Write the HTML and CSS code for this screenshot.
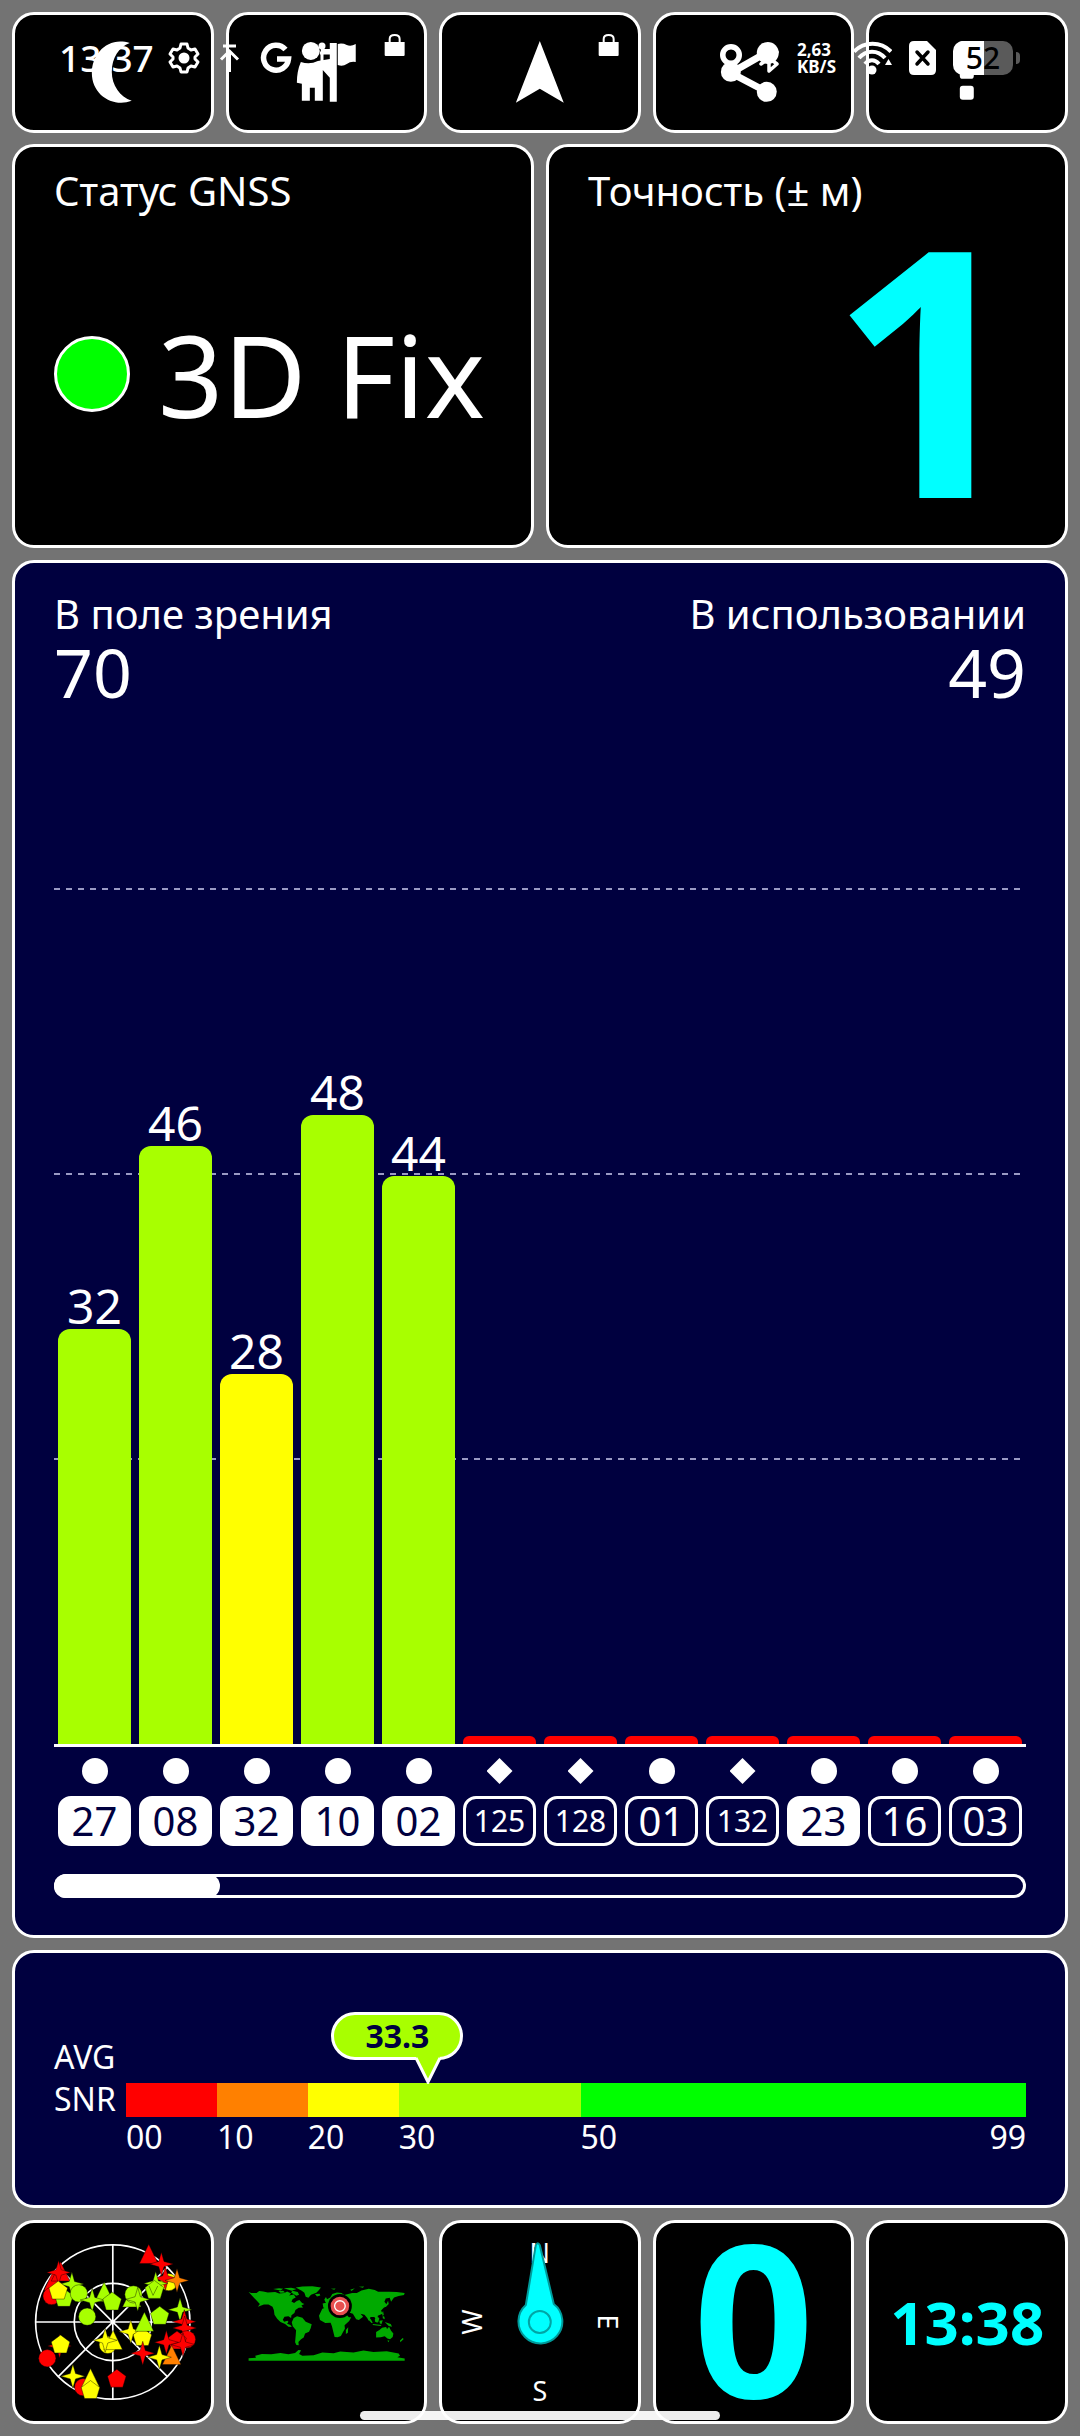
FILE: index.html
```html
<!DOCTYPE html>
<html lang="ru">
<head>
<meta charset="utf-8">
<meta name="viewport" content="width=device-width, initial-scale=1">
<title>Статус GNSS</title>
<link rel="stylesheet" href="styles.css">
</head>
<body>
<div class="statusbar">
  <div class="status-group status-left">
    <span class="clock">13:37</span>
    <svg class="icon32" viewBox="0 0 32 32"><path d="M13 2h6l1 4 3 2 4-1 3 5-3 3v2l3 3-3 5-4-1-3 2-1 4h-6l-1-4-3-2-4 1-3-5 3-3v-2l-3-3 3-5 4 1 3-2z" fill="none" stroke="#fff" stroke-width="3" stroke-linejoin="round"/><circle cx="16" cy="16" r="5.5" fill="#fff"/></svg>
    <svg class="icon32" viewBox="0 0 32 32"><path d="M9 4h13M15.500 30V10M7 17.500l8.500-8.500 8.500 8.500" fill="none" stroke="#fff" stroke-width="3"/></svg>
    <svg class="icon32" viewBox="0 0 32 32"><path d="M25.500 7.500A12.500 12.500 0 1 0 28.500 17H17" fill="none" stroke="#fff" stroke-width="5.500"/></svg>
    <svg class="icon32" viewBox="0 0 32 32"><circle cx="16" cy="4" r="3.500" fill="#fff"/><path d="M14 11h12M16 11v14l8 6" fill="none" stroke="#fff" stroke-width="3"/></svg>
  </div>
  <div class="status-group status-right">
    <svg class="ring" viewBox="0 0 22 32"><circle cx="11" cy="13" r="8" fill="none" stroke="#fff" stroke-width="6"/><path d="M3 16l8 14 8-14z" fill="#fff"/><circle cx="11" cy="13" r="5.500" fill="#000"/></svg>
    <svg class="bluetooth" viewBox="0 0 21 32"><path d="M2 10l16 12-8 7V3l8 7-16 12" fill="none" stroke="#fff" stroke-width="3.500" stroke-linejoin="round" stroke-linecap="round"/></svg>
    <span class="speed">2,63<br>KB/S</span>
    <svg class="wifi" viewBox="0 0 39 34"><path d="M1 10.500C11 0 28 0 38 10.500M6 17C13 8.500 25 8.500 32 17M12 23C16 18 22 18 26 23" fill="none" stroke="#fff" stroke-width="4"/><circle cx="19" cy="29" r="4.500" fill="#fff"/><path d="M32 24l3.500-6 3.500 6z" fill="#fff"/></svg>
    <svg class="sim" viewBox="0 0 27 34"><path d="M5 0h13l9 9v20q0 5-5 5H5q-5 0-5-5V5q0-5 5-5z" fill="#fff"/><path d="M8 11l11 12M19 11L8 23" stroke="#000" stroke-width="3.500" stroke-linecap="round"/></svg>
    <span class="battery"><span class="battery-body">52</span><span class="battery-tip"></span></span>
  </div>
</div>

<main class="dash">
  <nav class="tiles" aria-label="Действия">
    <button class="card tile" aria-label="Ночной режим"><svg viewBox="15 15 196 115"><path d="M130 43C108 36 92 54 92 73C92 95 113 108 132 101C120 97 112 85 112 72C112 58 119 47 130 43z" fill="#fff"/></svg></button>
    <button class="card tile" aria-label="Путевая точка"><svg viewBox="229 15 196 115" fill="#fff"><circle cx="311" cy="51" r="9"/><path d="M301 62q9 3 17-1l12-2v-7h-9v-3h9v-6h7v59h-7V78l-7-8v31h-8V88h-5v13h-8V84l-5-1q0-12 4-21z"/><path d="M338 44q5-1 9 1t9-1v18q-5-1-9 2t-9 1z"/><path d="M385 42h20v13q0 1-1 1h-18q-1 0-1-1z"/><path d="M390 43v-4q0-4 5-4t5 4v4" fill="none" stroke="#fff" stroke-width="2"/></svg></button>
    <button class="card tile" aria-label="Навигация"><svg viewBox="442 15 196 115" fill="#fff"><path d="M540 41l24 62-24-14-24 14z"/><path d="M599 42h20v13q0 1-1 1h-18q-1 0-1-1z"/><path d="M604 43v-4q0-4 5-4t5 4v4" fill="none" stroke="#fff" stroke-width="2"/></svg></button>
    <button class="card tile" aria-label="Поделиться"><svg viewBox="656 15 196 115" fill="#fff"><path d="M768 52l-37 21 36 19" fill="none" stroke="#fff" stroke-width="7"/><circle cx="768" cy="53" r="11"/><circle cx="731" cy="72" r="10"/><circle cx="767" cy="92" r="10"/></svg></button>
    <button class="card tile" aria-label="Предупреждение"><svg viewBox="869 15 196 115" fill="#fff"><path d="M959 45q0-4 4-4h8q4 0 4 4l-1 31q0 3-3 3h-8q-3 0-3-3z"/><rect x="960" y="86" width="14" height="14" rx="3"/></svg></button>
  </nav>

  <section class="pair">
    <article class="card info">
      <h2 class="label">Статус GNSS</h2>
      <div class="fix"><span class="lamp"></span><span class="fix-text">3D Fix</span></div>
    </article>
    <article class="card info">
      <h2 class="label">Точность (± м)</h2>
      <div class="accuracy">1</div>
    </article>
  </section>

  <section class="card navy chart">
    <header class="counts">
      <div><h2 class="label">В поле зрения</h2><div class="count">70</div></div>
      <div class="count-right"><h2 class="label">В использовании</h2><div class="count">49</div></div>
    </header>
    <div class="plot">
      <div class="gridline line-20"></div><div class="gridline line-40"></div><div class="gridline line-60"></div>
      <div class="col"><span class="snr">32</span><span class="bar" style="height:40%"></span></div>
      <div class="col"><span class="snr">46</span><span class="bar" style="height:57.6%"></span></div>
      <div class="col"><span class="snr">28</span><span class="bar fair" style="height:35.6%"></span></div>
      <div class="col"><span class="snr">48</span><span class="bar" style="height:60.6%"></span></div>
      <div class="col"><span class="snr">44</span><span class="bar" style="height:54.7%"></span></div>
      <div class="col"><span class="bar none"></span></div>
      <div class="col"><span class="bar none"></span></div>
      <div class="col"><span class="bar none"></span></div>
      <div class="col"><span class="bar none"></span></div>
      <div class="col"><span class="bar none"></span></div>
      <div class="col"><span class="bar none"></span></div>
      <div class="col"><span class="bar none"></span></div>
    </div>
    <div class="sats">
      <div class="sat"><i class="dot"></i><span class="id used">27</span></div>
      <div class="sat"><i class="dot"></i><span class="id used">08</span></div>
      <div class="sat"><i class="dot"></i><span class="id used">32</span></div>
      <div class="sat"><i class="dot"></i><span class="id used">10</span></div>
      <div class="sat"><i class="dot"></i><span class="id used">02</span></div>
      <div class="sat"><i class="dot diamond"></i><span class="id small">125</span></div>
      <div class="sat"><i class="dot diamond"></i><span class="id small">128</span></div>
      <div class="sat"><i class="dot"></i><span class="id">01</span></div>
      <div class="sat"><i class="dot diamond"></i><span class="id small">132</span></div>
      <div class="sat"><i class="dot"></i><span class="id used">23</span></div>
      <div class="sat"><i class="dot"></i><span class="id">16</span></div>
      <div class="sat"><i class="dot"></i><span class="id">03</span></div>
    </div>
    <input class="scroller" type="range" min="0" max="58" value="0" aria-label="Прокрутка спутников">
  </section>

  <section class="card navy avg">
    <div class="avg-label">AVG<br>SNR</div>
    <div class="scale">
      <div class="pointer" style="left:33.6%"><span class="bubble">33.3</span><svg class="tail" viewBox="0 0 26 27"><path d="M1 0L13 24 25 0z" fill="#a8ff00"/><path d="M1 1L13 25 25 1" fill="none" stroke="#fff" stroke-width="3"/></svg></div>
      <div class="bands"><i class="b0"></i><i class="b1"></i><i class="b2"></i><i class="b3"></i><i class="b4"></i></div>
      <div class="ticks"><span>00</span><span>10</span><span>20</span><span>30</span><span class="ends"><b>50</b><b>99</b></span></div>
    </div>
  </section>

  <nav class="tiles" aria-label="Экраны">
    <button class="card tile" aria-label="Карта неба">
      <svg viewBox="45 39 588 594">
        <defs>
          <circle id="c" r="26"/>
          <path id="p" d="M0-29L28-8 18 25H-18L-28-8z"/>
          <path id="s" d="M0-36L8-8 36 0 8 8 0 36-8 8-36 0-8-8z"/>
          <path id="t" d="M0-32L28 26H-28z"/>
        </defs>
        <g fill="none" stroke="#fff" stroke-width="5"><circle cx="339" cy="336" r="232"/><circle cx="339" cy="336" r="116"/><path d="M339 104v464M107 336h464M175 172l328 328M503 172L175 500"/></g>
        <g stroke="#000" stroke-opacity=".4" stroke-width="3">
          <g fill="#f00"><use href="#t" x="447" y="134"/><use href="#s" x="485" y="162"/><use href="#t" x="160" y="215"/><use href="#t" x="182" y="187"/><use href="#s" x="176" y="187"/><use href="#c" x="155" y="258"/></g>
          <g fill="#ff0"><use href="#c" x="507" y="216"/></g>
          <g fill="#f00"><use href="#s" x="497" y="205"/></g>
          <use href="#s" x="532" y="211" fill="#ff8000"/>
          <g fill="#a8ff00"><use href="#p" x="192" y="264"/><use href="#s" x="216" y="222"/><use href="#c" x="237" y="250"/><use href="#t" x="313" y="248"/><use href="#s" x="277" y="270"/><use href="#p" x="337" y="275"/><use href="#t" x="396" y="265"/><use href="#c" x="401" y="253"/><use href="#s" x="414" y="268"/><use href="#s" x="468" y="220"/><use href="#p" x="464" y="240"/><use href="#p" x="480" y="318"/><use href="#s" x="541" y="299"/><use href="#c" x="262" y="320"/></g>
          <path d="M448 228l12 28 14-28" fill="none"/>
          <g fill="#ff0"><use href="#p" x="175" y="242"/><use href="#s" x="393" y="365"/><use href="#p" x="428" y="382"/></g>
          <use href="#t" x="434" y="338" fill="#a8ff00"/>
          <g fill="#ff0"><use href="#c" x="324" y="405"/><use href="#t" x="340" y="393"/><use href="#s" x="316" y="391"/></g>
          <g fill="#f00"><use href="#s" x="554" y="335"/><use href="#s" x="555" y="354"/><use href="#c" x="562" y="388"/><use href="#p" x="532" y="392"/><use href="#s" x="550" y="404"/><use href="#s" x="500" y="397"/><use href="#s" x="429" y="430"/><use href="#s" x="179" y="408"/><use href="#c" x="142" y="445"/><use href="#c" x="250" y="532"/><use href="#p" x="351" y="507"/></g>
          <use href="#t" x="516" y="438" fill="#ff8000"/>
          <g fill="#ff0"><use href="#s" x="479" y="442"/><use href="#p" x="182" y="404"/><use href="#s" x="219" y="499"/><use href="#t" x="272" y="508"/><use href="#p" x="272" y="541"/></g>
        </g>
      </svg>
    </button>
    <button class="card tile" aria-label="Карта мира">
      <svg viewBox="685 39 589 594">
        <g fill="#00aa00">
          <path d="M744 246l8 3 16 0 8-6 12 1 14 3 22-1 12 4 16-1 8-5 12 6-6 6 14-3 6 9-9 5-4 7 8 5 8-6 8-3 8 9 7 3-9 4 5 6-13 1-10 7-3 9-9 7-1 8-8-5-12 1-5 9 4 6 10-3 3 3-4 6 10 4 4 6-10-1-10-8-14-6-10-10-8-12-2-14-4-10-12-7-14 0-18 7 6-8z"/>
          <path d="M886 232l20-3 30-1 26 4-8 10-6 6-16 6-8 9-8-3-4-12-8-6zM818 237l18-3 12 2-8 5zM850 234l22-1 16 4-14 5zM876 242l16 4 4 8-8 3-16-10zM834 243l14-1 6 5-14 1zM944 252l14-1 2 5-10 3z"/>
          <path d="M880 324l10-5 16 4 10 12 18 8-3 12-5 10-12 6-4 12-8 5-8 8 1 10-7-1-4-8 2-22 1-14-10-12-3-12z"/>
          <path d="M966 296l18-6 18 8 16 0 16 3 6 14 6 7 7 0-6 11-14 13 1 10-6 11-6 11-10 4-9-1-4-16-4-16-4-11-16 1-16-9-3-13z"/>
          <path d="M969 292l-2-12 10-2-1-8 14-8 6-10 14-5 14 2 8 6 24-6 14 0 14-8 22-5 18 4 10 5 34 0 22 1 24 3-2 6-16 3-14 4-9 13-4-12-12 2-4 10 8 10-10 8-8 8 4 10-14 6 0 8 3 10-7-3-6-11-12 0-4 13-6-10-8-10-12-3 8 9-13 10-8-2-10-17-14-4-6 5-10-10-10 1-10 5z"/>
          <path d="M972 268l5-7 4 8-5 8zM992 236l14-1-4 4zM1050 239l14-5-10 9zM1076 230l16-1-4 4zM1146 308l3-5 2 12-4 2zM1160 280l4-8 2 10-8 8-6 2zM1104 320l8 8 6 10-4 1-10-11zM1124 328l10-7 4 5-6 12-7-3zM1138 332l10-1-4 12-5-3zM1118 342l26 3-2 3-24-3zM1154 336l18 6 4 8-10-2zM1148 318l5 2 1 8-6-3zM1082 318l3 4-3 2z"/>
          <path d="M1128 366l10-6 8-7 12-2 3 6 6-7 6 12 7 9-2 10-8 7-8-2-8-7-12 3-14 1zM1037 360l7-8-1 16-6 4zM1200 392l8-8 3 3-10 10zM1162 392l6 0-3 5z"/>
          <path d="M744 453V445L766 444 764 438 784 432 812 433 840 429 864 433 884 429 894 420 902 421 896 432 906 438 940 436 966 428 1000 430 1020 425 1060 428 1090 422 1120 426 1160 424 1196 431 1200 438 1192 442 1214 446V453z"/>
        </g>
        <circle cx="1019" cy="288" r="36" fill="#000"/><circle cx="1019" cy="288" r="28" fill="#e85050"/><circle cx="1019" cy="288" r="16" fill="none" stroke="#fff" stroke-width="4"/>
      </svg>
    </button>
    <button class="card tile" aria-label="Компас">
      <svg class="compass" viewBox="442 2223 196 198">
        <g fill="#fff" text-anchor="middle"><text x="540" y="2263">N</text><text x="540" y="2401">S</text><text transform="translate(482 2322) rotate(-90)">W</text><text transform="translate(598 2322) rotate(90)">E</text></g>
        <path d="M526 2305L536 2245Q538 2241 540 2245L554 2304A22 22 0 1 1 526 2305z" fill="#00ffff" stroke="#009a9a" stroke-width="2"/><circle cx="540" cy="2322" r="11" fill="none" stroke="#00a5a5" stroke-width="2"/>
      </svg>
    </button>
    <button class="card tile speedo">0</button>
    <button class="card tile time">13:38</button>
  </nav>
</main>
<div class="home-bar"></div>
</body>
</html>
```
FILE: styles.css
```css
* { box-sizing: border-box; }

body {
  margin: 0;
  position: relative;
  background: #737373;
  color: #fff;
  font-family: "Noto Sans", sans-serif;
}

.dash {
  display: grid;
  grid-template-rows: 120px 404px 1fr 258px 204px;
  gap: 12px;
  min-height: 100vh;
  padding: 12px;
}

.card {
  border: 3px solid #fff;
  border-radius: 22px;
  background: #000;
  color: #fff;
}

.navy { background: #00003f; }

.tiles {
  display: grid;
  grid-template-columns: repeat(5, 1fr);
  gap: 12px;
}

.tile {
  display: flex;
  align-items: center;
  justify-content: center;
  min-width: 0;
  padding: 0;
  font-family: inherit;
  font-weight: 700;
}

.tile svg { width: 100%; height: 100%; }

.pair {
  display: grid;
  grid-template-columns: 1fr 1fr;
  gap: 12px;
}

.info {
  display: flex;
  flex-direction: column;
  padding: 20px 39px 12px;
}

.label {
  margin: 0;
  font-size: 40px;
  font-weight: 400;
  line-height: 48px;
}

.fix {
  flex: 1;
  display: flex;
  align-items: center;
  gap: 28px;
  white-space: nowrap;
}

.lamp {
  width: 76px;
  height: 76px;
  border: 3px solid #fff;
  border-radius: 50%;
  background: #0f0;
}

.fix-text { font-size: 114px; line-height: 120px; }

.accuracy {
  color: #0ff;
  font-size: 344px;
  font-weight: 700;
  line-height: 300px;
  text-align: right;
}

.chart {
  display: flex;
  flex-direction: column;
  padding: 27px 39px 37px;
}

.counts { display: flex; justify-content: space-between; }
.count { font-size: 68px; line-height: 68px; }
.count-right { text-align: right; }

.plot {
  position: relative;
  flex: 1;
  display: grid;
  grid-template-columns: repeat(12, 1fr);
  gap: 8px;
  min-height: 400px;
  padding: 0 4px;
  border-bottom: 3px solid #fff;
}

.gridline {
  position: absolute;
  left: 0;
  right: 4px;
  height: 2px;
  background: repeating-linear-gradient(90deg, #9a9ac4 0 6px, transparent 6px 12px);
}

.line-20 { bottom: 27.4%; }
.line-40 { bottom: 54.8%; }
.line-60 { bottom: 82.3%; }

.col {
  position: relative;
  display: flex;
  flex-direction: column;
  justify-content: flex-end;
  text-align: center;
}

.snr { font-size: 48px; line-height: 46px; }
.bar { flex: none; border-radius: 12px 12px 0 0; background: #a8ff00; }
.fair { background: #ff0; }
.none { height: 8px; border-radius: 6px 6px 0 0; background: #f00; }

.sats {
  display: grid;
  grid-template-columns: repeat(12, 1fr);
  gap: 8px;
  padding: 11px 4px 28px;
}

.sat {
  display: flex;
  flex-direction: column;
  align-items: center;
  gap: 12px;
}

.dot { width: 26px; height: 26px; border-radius: 50%; background: #fff; }
.diamond { border-radius: 0; clip-path: polygon(50% 0, 100% 50%, 50% 100%, 0 50%); }

.id {
  width: 100%;
  border: 3px solid #fff;
  border-radius: 13px;
  font-size: 40px;
  line-height: 44px;
  text-align: center;
}

.used { background: #fff; color: #00003f; }
.small { font-size: 30px; }

.scroller {
  appearance: none;
  width: 100%;
  height: 24px;
  margin: 0;
  border-radius: 12px;
  background: transparent;
  box-shadow: inset 0 0 0 3px #fff;
}

.scroller::-webkit-slider-thumb {
  appearance: none;
  width: 166px;
  height: 24px;
  border-radius: 12px;
  background: #fff;
}

.avg {
  display: grid;
  grid-template-columns: 72px 1fr;
  align-items: start;
  padding: 24px 39px;
  font-size: 32px;
}

.avg-label { padding-top: 59px; line-height: 42px; }
.scale { position: relative; padding-top: 106px; }
.bands, .ticks { display: grid; grid-template-columns: 10fr 10fr 10fr 20fr 49fr; }
.bands i { height: 34px; }
.b0 { background: #f00; }
.b1 { background: #ff8000; }
.b2 { background: #ff0; }
.b3 { background: #a8ff00; }
.b4 { background: #0f0; }
.ticks { line-height: 40px; }
.ticks b { font-weight: 400; }
.ends { display: flex; justify-content: space-between; }

.pointer { position: absolute; top: 35px; width: 0; }

.bubble {
  position: absolute;
  left: -97px;
  width: 132px;
  height: 48px;
  border: 3px solid #fff;
  border-radius: 24px;
  background: #a8ff00;
  color: #00003f;
  font-weight: 700;
  line-height: 42px;
  text-align: center;
}

.tail { position: absolute; top: 45px; left: -13px; width: 26px; height: 27px; }

.compass text { font-size: 27px; font-weight: 400; }
.speedo { padding-bottom: 12px; color: #0ff; font-size: 212px; line-height: 186px; }
.time { color: #0ff; font-size: 60px; }

.statusbar {
  position: absolute;
  z-index: 2;
  top: 37px;
  left: 0;
  right: 0;
  display: flex;
  align-items: center;
  justify-content: space-between;
  height: 42px;
  padding: 0 60px 0 59px;
  pointer-events: none;
}

.status-group { display: flex; align-items: center; }
.status-left { gap: 14px; }
.status-right { gap: 17px; }
.clock { font-size: 37px; font-weight: 500; line-height: 42px; }
.icon32 { width: 32px; height: 32px; }
.ring { width: 22px; height: 32px; }
.bluetooth { width: 21px; height: 32px; }
.speed { width: 39px; font-size: 17px; font-weight: 700; line-height: 17px; white-space: nowrap; }
.wifi { width: 39px; height: 34px; }
.sim { width: 27px; height: 34px; }
.battery { display: flex; align-items: center; gap: 3px; }

.battery-body {
  width: 60px;
  height: 34px;
  border-radius: 10px;
  background: linear-gradient(90deg, #fff 52%, #5a5a5a 52%);
  color: #000;
  font-size: 30px;
  font-weight: 500;
  line-height: 34px;
  text-align: center;
}

.battery-tip { width: 4px; height: 12px; border-radius: 0 4px 4px 0; background: #5a5a5a; }

.home-bar {
  position: absolute;
  z-index: 2;
  bottom: 16px;
  left: 33.333%;
  width: 33.333%;
  height: 9px;
  border-radius: 5px;
  background: rgba(255, 255, 255, .93);
}
```
